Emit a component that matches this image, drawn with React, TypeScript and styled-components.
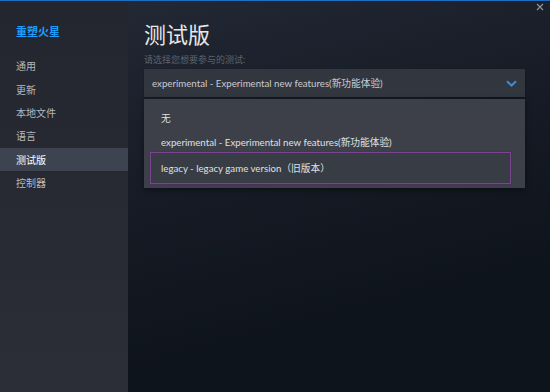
import React from "react";
import styled, { createGlobalStyle } from "styled-components";

const Global = createGlobalStyle`
  html, body { margin: 0; padding: 0; background: #0e141c; }
  body { width: 550px; height: 392px; overflow: hidden; }
  * { box-sizing: border-box; }
`;

const FONT = `Lato, "Noto Sans CJK SC", sans-serif`;

const Window = styled.div`
  width: 550px;
  height: 392px;
  display: flex;
  border-top: 1px solid #1d6fc4;
  font-family: ${FONT};
  position: relative;
  overflow: hidden;
`;

const Sidebar = styled.nav`
  width: 128px;
  flex: none;
  background: linear-gradient(180deg, #23262e 0%, #2b2e37 100%);
  display: flex;
  flex-direction: column;
  padding-top: 24px;
`;

const GameTitle = styled.div`
  color: #1a9fff;
  font-size: 11px;
  font-weight: 700;
  line-height: 14px;
  padding-left: 16px;
  margin-bottom: 15px;
`;

const NavItem = styled.div<{ $active?: boolean }>`
  height: 23.4px;
  display: flex;
  align-items: center;
  padding-left: 16px;
  font-size: 10px;
  color: ${(p) => (p.$active ? "#ffffff" : "#b5b9be")};
  background: ${(p) => (p.$active ? "#3d4350" : "transparent")};
`;

const Main = styled.main`
  flex: 1;
  background: linear-gradient(165deg, #222834 0%, #161b25 40%, #0e141c 75%);
  padding: 20px 25px 0 16px;
  display: flex;
  flex-direction: column;
`;

const Title = styled.h1`
  margin: 0;
  font-size: 22px;
  font-weight: 400;
  line-height: 28px;
  color: #e6e8ea;
`;

const Subtitle = styled.div`
  margin-top: 5px;
  font-size: 9px;
  line-height: 12px;
  color: #5c6470;
`;

const Select = styled.div`
  margin-top: 3px;
  height: 28px;
  background: #32363f;
  display: flex;
  align-items: center;
  justify-content: space-between;
  padding: 0 8px 0 8px;
  font-size: 9.7px;
  color: #c9ccd0;
  box-shadow: 0 1px 2px rgba(0, 0, 0, 0.3);
`;

const Menu = styled.div`
  margin-top: 2px;
  background: #3d4049;
  padding: 7px 14px 4px 6px;
  display: flex;
  flex-direction: column;
  box-shadow: 0 2px 6px rgba(0, 0, 0, 0.4);
`;

const Option = styled.div<{ $active?: boolean }>`
  display: flex;
  align-items: center;
  padding-left: ${(p) => (p.$active ? "10px" : "11px")};
  height: ${(p) => (p.$active ? "32px" : "24px")};
  margin-top: ${(p) => (p.$active ? "-2px" : "0")};
  font-size: 9.7px;
  color: #dfe1e3;
  background: ${(p) => (p.$active ? "#383c45" : "transparent")};
  border: ${(p) => (p.$active ? "1px solid #7a4590" : "none")};
  box-shadow: ${(p) => (p.$active ? "0 0 0 1px #4b2f5c" : "none")};
`;

const Close = styled.div`
  position: absolute;
  top: 2px;
  right: 6px;
  width: 8px;
  height: 8px;
  display: flex;
  align-items: center;
  justify-content: center;
`;

const navItems = ["通用", "更新", "本地文件", "语言", "测试版", "控制器"];

export default function App() {
  return (
    <>
      <Global />
      <Window>
        <Sidebar>
          <GameTitle>重塑火星</GameTitle>
          {navItems.map((n) => (
            <NavItem key={n} $active={n === "测试版"}>
              {n}
            </NavItem>
          ))}
        </Sidebar>
        <Main>
          <Title>测试版</Title>
          <Subtitle>请选择您想要参与的测试:</Subtitle>
          <Select>
            <span>experimental - Experimental new features(新功能体验)</span>
            <svg width="11" height="7" viewBox="0 0 11 7">
              <path d="M1 1.2 L5.5 5.5 L10 1.2" fill="none" stroke="#2f8fe6" strokeWidth="2" />
            </svg>
          </Select>
          <Menu>
            <Option>无</Option>
            <Option>experimental - Experimental new features(新功能体验)</Option>
            <Option $active>legacy - legacy game version（旧版本）</Option>
          </Menu>
        </Main>
        <Close>
          <svg width="8" height="8" viewBox="0 0 8 8">
            <path d="M1 1 L7 7 M7 1 L1 7" stroke="#8e949c" strokeWidth="1.2" />
          </svg>
        </Close>
      </Window>
    </>
  );
}
